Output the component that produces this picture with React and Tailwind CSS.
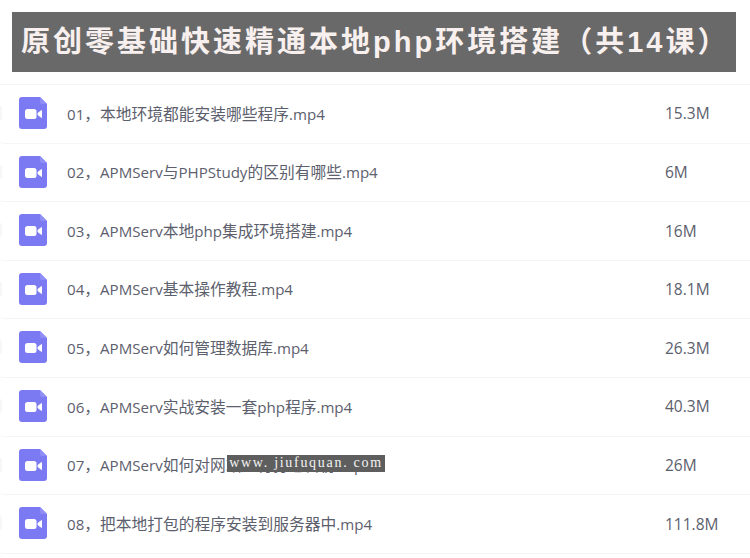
import React from 'react';

const lessons = [
    { name: '01，本地环境都能安装哪些程序.mp4', size: '15.3M' },
    { name: '02，APMServ与PHPStudy的区别有哪些.mp4', size: '6M' },
    { name: '03，APMServ本地php集成环境搭建.mp4', size: '16M' },
    { name: '04，APMServ基本操作教程.mp4', size: '18.1M' },
    { name: '05，APMServ如何管理数据库.mp4', size: '26.3M' },
    { name: '06，APMServ实战安装一套php程序.mp4', size: '40.3M' },
    { name: '07，APMServ如何对网站进行打包备份.mp4', size: '26M' },
    { name: '08，把本地打包的程序安装到服务器中.mp4', size: '111.8M' },
];

// latin runs sit a little smaller than the chinese ones in the picture
const MixedText = ({ text }) =>
    text.split(/([\x20-\x7e]+)/).filter(Boolean).map((part, i) =>
        /^[\x20-\x7e]/.test(part)
            ? <span key={i} className="text-[15.1px]">{part}</span>
            : <span key={i} className="text-[15.75px]">{part}</span>
    );

const VideoFileIcon = () => (
    <svg width="28" height="32" viewBox="0 0 28 32" className="shrink-0">
        <path d="M3 0H21L28 7V29a3 3 0 0 1-3 3H3a3 3 0 0 1-3-3V3a3 3 0 0 1 3-3Z" fill="#7b7af3" />
        <path d="M21 0L28 7H23a2 2 0 0 1-2-2Z" fill="#8f8df6" />
        <rect x="6" y="12" width="11.5" height="10" rx="2.5" fill="#fff" />
        <path d="M19 16.2L22.5 13.5V20.5L19 17.8Z" fill="#fff" stroke="#fff" strokeLinejoin="round" />
    </svg>
);

const LessonRow = ({ name, size }) => (
    <div className="h-[58.6px] shrink-0 flex items-center pb-[1.6px] border-b border-[#f5f5f9] rounded-bl-[4px]">
        <div className="w-[2px] h-[14px] bg-[#f7f7fa] rounded-r-sm mr-[17px]" />
        <VideoFileIcon />
        <span className="ml-[20px] w-[598px] pt-[2px] text-[#5c606d] font-['Open_Sans','Noto_Sans_CJK_SC',sans-serif] whitespace-nowrap">
            <MixedText text={name} />
        </span>
        <span className="pt-[2px] text-[15.5px] text-[#5c606d] font-['Open_Sans',sans-serif]">{size}</span>
    </div>
);

export default function App() {
    return (
        <div className="relative w-[750px] h-[558px] overflow-hidden bg-white font-['Liberation_Sans','Noto_Sans_CJK_SC',sans-serif]">
            {/* Title bar */}
            <div className="pt-3 px-3">
                <div className="h-[60px] w-[724px] bg-[#696969] flex items-center pl-[9px] pt-[2px]">
                    <h1 className="text-[29px] font-bold tracking-[3px] text-[#f8f0ee] whitespace-nowrap">
                        原创零基础快速精通本地php环境搭建（共14课）
                    </h1>
                </div>
            </div>

            {/* Lesson list */}
            <div className="mt-[12px] flex flex-col border-t border-[#f5f5f9]">
                {lessons.map((lesson) => (
                    <LessonRow key={lesson.name} {...lesson} />
                ))}
            </div>

            {/* Watermark */}
            <div className="absolute left-[227px] top-[455px] h-[17px] w-[158px] bg-[#5e5e5e] text-[#f4f4f4] text-[14px] leading-[16px] text-center tracking-[1.7px] font-['Liberation_Serif',serif] whitespace-nowrap">
                www. jiufuquan. com
            </div>
        </div>
    );
}
